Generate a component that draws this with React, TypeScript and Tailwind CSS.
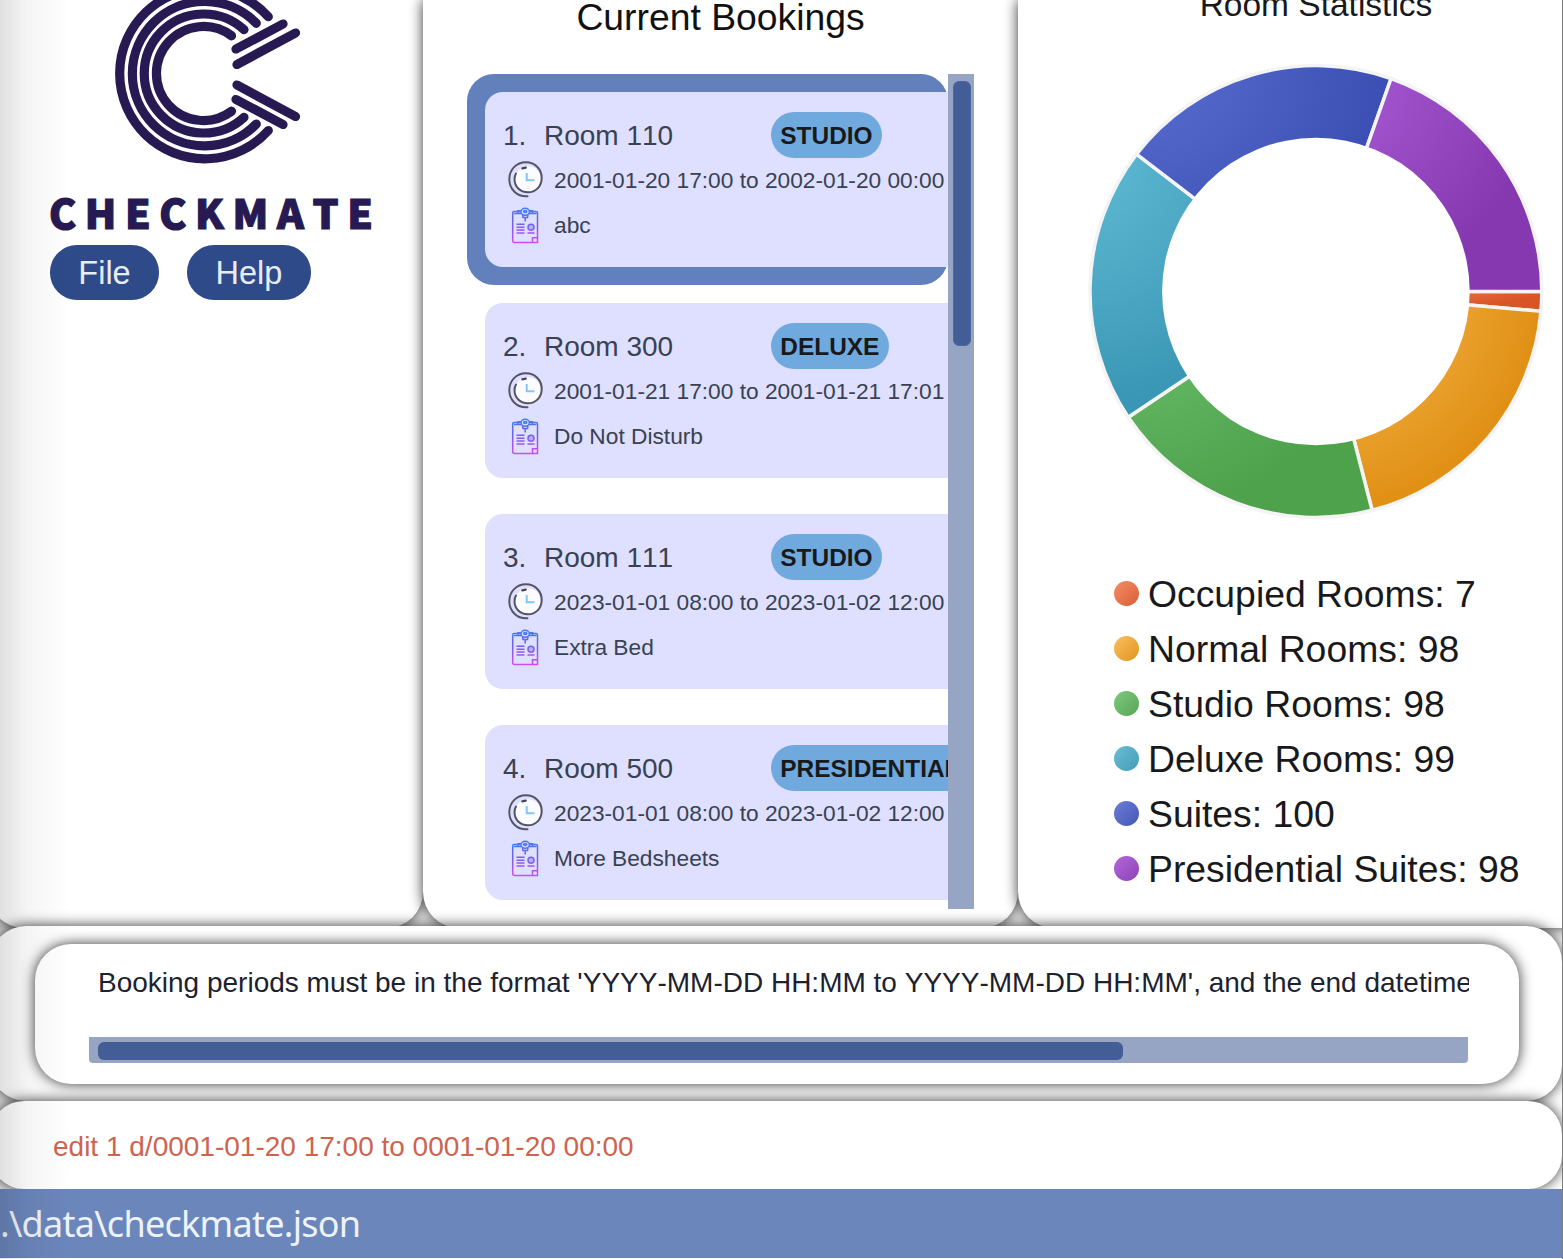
import React from "react";

const bookings = [
  { id: 1, room: "Room 110", type: "STUDIO", period: "2001-01-20 17:00 to 2002-01-20 00:00", note: "abc" },
  { id: 2, room: "Room 300", type: "DELUXE", period: "2001-01-21 17:00 to 2001-01-21 17:01", note: "Do Not Disturb" },
  { id: 3, room: "Room 111", type: "STUDIO", period: "2023-01-01 08:00 to 2023-01-02 12:00", note: "Extra Bed" },
  { id: 4, room: "Room 500", type: "PRESIDENTIAL", period: "2023-01-01 08:00 to 2023-01-02 12:00", note: "More Bedsheets" },
];

const stats = [
  { label: "Occupied Rooms", value: 7, light: "#f58c66", dark: "#d95525", dotFrom: "#f58c66", dotTo: "#d95f35" },
  { label: "Normal Rooms", value: 98, light: "#fbbf5c", dark: "#e09014", dotFrom: "#fbbf5c", dotTo: "#e09522" },
  { label: "Studio Rooms", value: 98, light: "#6fc16e", dark: "#4ea24c", dotFrom: "#7fc87f", dotTo: "#56a654" },
  { label: "Deluxe Rooms", value: 99, light: "#60bbd4", dark: "#3895b3", dotFrom: "#6bbdd4", dotTo: "#459cb8" },
  { label: "Suites", value: 100, light: "#5a6fd2", dark: "#3b4eb3", dotFrom: "#6b7dd6", dotTo: "#4657b7" },
  { label: "Presidential Suites", value: 98, light: "#ab5ed8", dark: "#8638b0", dotFrom: "#b268da", dotTo: "#8d42b5" },
];

function Logo() {
  return (
    <svg className="mx-auto block h-[180px] w-[324px]" viewBox="50 -16 324 180" fill="none" stroke="#271a52" strokeWidth="9.200" strokeLinecap="round">
      <path d="M231.500 35.800 A47 47 0 1 0 231.500 111.200" />
      <path d="M244 29.700 A59.500 59.500 0 1 0 244 117.300" />
      <path d="M256.300 23.300 A72.200 72.200 0 1 0 256.300 124" />
      <path d="M268.300 16.700 A85.200 85.200 0 1 0 268.300 130.500" />
      <path d="M236 49 L283 24 M237 64.500 L295.500 33 M237 85 L295.500 116.500 M236 99.500 L283 124.500" />
    </svg>
  );
}

function Clock() {
  return (
    <svg className="h-[38px] w-9 shrink-0" viewBox="0 0 36 38" fill="none" strokeLinecap="round">
      <circle cx="21" cy="18" r="12.700" fill="#fcfcff" />
      <path d="M20.500 35.300 C10 36 2.300 28 2.300 18.300 C2.300 8.500 9.500 1.300 18.800 1.300 C28.500 1.300 34.700 8.500 34.700 17 C34.700 25.500 28.500 31.300 21 31.300 C13 31.300 7.500 25.500 7.500 18 Q7.500 15 9 12.500" stroke="#555464" strokeWidth="2" />
      <path d="M15.300 7.300 L18.800 6.700" stroke="#454554" strokeWidth="2.200" />
      <path d="M19.700 12 V19.300 H27.500" stroke="#83c5f5" strokeWidth="2" strokeLinecap="butt" />
    </svg>
  );
}

function Clipboard() {
  return (
    <svg className="h-[38px] w-9 shrink-0" viewBox="0 0 36 38" fill="none" strokeWidth="1.500">
      <defs>
        <linearGradient id="clip" gradientUnits="userSpaceOnUse" x1="0" y1="1" x2="0" y2="36">
          <stop offset="0" stopColor="#3f7df8" />
          <stop offset="0.400" stopColor="#6a62e6" />
          <stop offset="1" stopColor="#d04cf4" />
        </linearGradient>
      </defs>
      <g stroke="url(#clip)">
        <path d="M13.500 4.500 H7 Q5.700 4.500 5.700 6 V33.500 Q5.700 35.500 7.500 35.500 H30.500 V6 Q30.500 4.500 29 4.500 H22.500" />
        <path d="M11 6.500 V3.800 H14 M25.500 6.500 V3.800 H22 M7 6.500 H14 M22 6.500 H29.500" />
        <ellipse cx="18.200" cy="4.700" rx="4.200" ry="3.500" />
        <ellipse cx="18.200" cy="4.500" rx="1.600" ry="0.900" />
        <path d="M15.500 8 L16 10.500 H20.500 L21 8 M18.200 10.500 V14.500" />
        <path d="M9.500 17.300 H17.500 M9.500 20.200 H17.500 M9.500 23 H17.500 M9.500 25.900 H17.500 M20.500 25.900 H27.500 M25.500 35.300 V30.700 H30.500" />
        <circle cx="24" cy="20.300" r="3" fill="#a8b6f8" />
      </g>
    </svg>
  );
}

function Booking({ b, selected }: { b: (typeof bookings)[number]; selected: boolean }) {
  return (
    <li className={selected ? "h-[211px] w-[481px] rounded-[27px] bg-[#6280bb] p-[18px]" : "h-[211px] w-[481px] p-[18px]"}>
      <div className="h-[175px] w-[520px] rounded-[18px] bg-[#dfdfff] pt-5 pl-[18px] whitespace-nowrap text-[#384252]">
        <div className="flex h-[46px] items-center text-[28px]">
          <span className="w-[41px] pt-0.5">{b.id}.</span>
          <span className="w-[227px] pt-0.5">{b.room}</span>
          <span className="flex h-[46px] items-center rounded-full bg-[#70a9de] px-[9.300px] pt-0.5 text-[24.450px] font-bold text-[#19191b]">{b.type}</span>
        </div>
        <div className="flex h-[45px] items-center pl-[4px] text-[22.720px]">
          <div className="pb-[2px]">
            <Clock />
          </div>
          <span className="pl-[11px]">{b.period}</span>
        </div>
        <div className="flex h-[45px] items-center pl-[4px] text-[22.720px]">
          <Clipboard />
          <span className="pl-[11px]">{b.note}</span>
        </div>
      </div>
    </li>
  );
}

function Donut() {
  const cx = 227.900;
  const cy = 228.500;
  const r = 225.900;
  const total = stats.reduce((s, x) => s + x.value, 0);
  let acc = 0;
  const slices = stats.map((s) => {
    const a = (acc / total) * Math.PI * 2;
    acc += s.value;
    const e = (acc / total) * Math.PI * 2;
    const d = `M${cx} ${cy} L${cx + r * Math.cos(a)} ${cy + r * Math.sin(a)} A${r} ${r} 0 0 1 ${cx + r * Math.cos(e)} ${cy + r * Math.sin(e)} Z`;
    return { ...s, d };
  });
  return (
    <svg className="h-[456px] w-[456px]" viewBox="0 0 456 456">
      <defs>
        {slices.map((s, i) => (
          <radialGradient key={i} id={`slice${i}`} cx="0" cy="0" r="1">
            <stop offset="0" stopColor={s.light} />
            <stop offset="1" stopColor={s.dark} />
          </radialGradient>
        ))}
      </defs>
      {slices.map((s, i) => (
        <path key={i} d={s.d} fill={`url(#slice${i})`} stroke="#f4f4f4" strokeWidth="3.500" strokeLinejoin="round" />
      ))}
      <circle cx={cx} cy={cy} r="153.800" fill="#fff" />
    </svg>
  );
}

export default function App() {
  return (
    <div className="relative flex h-[1259px] w-[1563px] flex-col overflow-hidden bg-white font-['Liberation_Sans',sans-serif] [font-kerning:none]">
      <div className="flex h-[928px] w-[1640px] shrink-0 bg-[#f8f8f8]">
        <section className="-ml-3 h-[928px] w-[435px] rounded-b-[36px] bg-white pl-[62px] shadow-[0_0_14px_rgba(0,0,0,0.8)]">
          <div className="-mt-4 w-[324px]">
            <Logo />
            <div className="mt-[24px] -ml-px h-[47px] text-[40.800px] leading-[47px] font-black tracking-[8.600px] whitespace-nowrap text-[#271a52] font-['Noto_Sans_CJK_SC',sans-serif] [-webkit-text-stroke:1.200px_#271a52]">
              CHECKMATE
            </div>
          </div>
          <nav className="mt-2.5 flex gap-7 text-[32.500px] text-[#e8ecf5]">
            <button className="h-[55px] w-[109px] rounded-[27px] bg-[#2e4a89] pt-0.5">File</button>
            <button className="h-[55px] w-[124px] rounded-[27px] bg-[#2e4a89] pt-0.5">Help</button>
          </nav>
        </section>

        <section className="relative h-[928px] w-[595px] rounded-b-[36px] bg-white pl-[44px] shadow-[0_0_14px_rgba(0,0,0,0.8)]">
          <h2 className="h-[74px] w-[507px] text-center text-[37.300px] leading-[34px] text-[#111]">Current Bookings</h2>
          <div className="flex h-[835px]">
            <ul className="w-[481px] overflow-hidden">
              {bookings.map((b) => (
                <Booking key={b.id} b={b} selected={b.id === 1} />
              ))}
            </ul>
            <div className="w-[26px] bg-[#97a5c5] pt-[7px] pl-[5px]">
              <div className="h-[265px] w-[18px] rounded-[6px] border border-[#4d68a3] bg-[#435d96]" />
            </div>
          </div>
        </section>

        <section className="relative h-[928px] w-[620px] rounded-b-[36px] bg-white shadow-[0_0_14px_rgba(0,0,0,0.8)]">
          <h2 className="h-[63px] w-[596px] text-center text-[33.500px] leading-[10px] text-[#19191b]">Room Statistics</h2>
          <div className="ml-[70px]">
            <Donut />
          </div>
          <ul className="mt-[47px] ml-[96px] text-[37.330px] text-[#19191b]">
            {stats.map((s) => (
              <li key={s.label} className="flex h-[55px] items-center gap-[9px] whitespace-nowrap">
                <span
                  className="h-[25px] w-[25px] rounded-full"
                  style={{ backgroundImage: `linear-gradient(135deg, ${s.dotFrom}, ${s.dotTo})` }}
                />
                <span className="pt-0.5">
                  {s.label}: {s.value}
                </span>
              </li>
            ))}
          </ul>
        </section>
      </div>

      <section className="relative -mt-0.5 -ml-2.5 h-[175px] w-[1572px] shrink-0 rounded-[36px] bg-white pt-[18px] pl-[45px] shadow-[0_0_14px_rgba(0,0,0,0.8)]">
        <div className="h-[140px] w-[1484px] rounded-[36px] bg-white pt-[18px] pl-[54px] shadow-[0_0_14px_rgba(0,0,0,0.8)]">
          <div className="h-[75px] w-[1380px] overflow-hidden pl-[9px] text-[28px] leading-[42px] whitespace-nowrap text-[#1c2230]">
            Booking periods must be in the format 'YYYY-MM-DD HH:MM to YYYY-MM-DD HH:MM', and the end datetime
          </div>
          <div className="h-[26px] w-[1379px] rounded-b-[4px] bg-[#97a5c5] pt-[5px] pl-[9px]">
            <div className="h-[18px] w-[1025px] rounded-[6px] bg-[#435d96]" />
          </div>
        </div>
      </section>

      <section className="relative -ml-2.5 h-[88px] w-[1572px] shrink-0 rounded-[34px] bg-white pl-[63px] text-[28px] leading-[91px] whitespace-nowrap text-[#cc6450] shadow-[0_0_14px_rgba(0,0,0,0.8)]">
        edit 1 d/0001-01-20 17:00 to 0001-01-20 00:00
      </section>

      <footer className="relative h-[69px] shrink-0 bg-[#6b86bb] text-[36px] leading-[69px] tracking-[-0.730px] whitespace-nowrap text-[#eef2fa] font-['Noto_Sans',sans-serif]">
        .\data\checkmate.json
      </footer>

      <div className="pointer-events-none absolute inset-y-0 left-0 w-[70px] bg-linear-to-r from-black/12 via-black/4 via-40% to-transparent" />
      <div className="absolute inset-y-0 right-0 w-px bg-[#7c7c7c]" />
    </div>
  );
}
